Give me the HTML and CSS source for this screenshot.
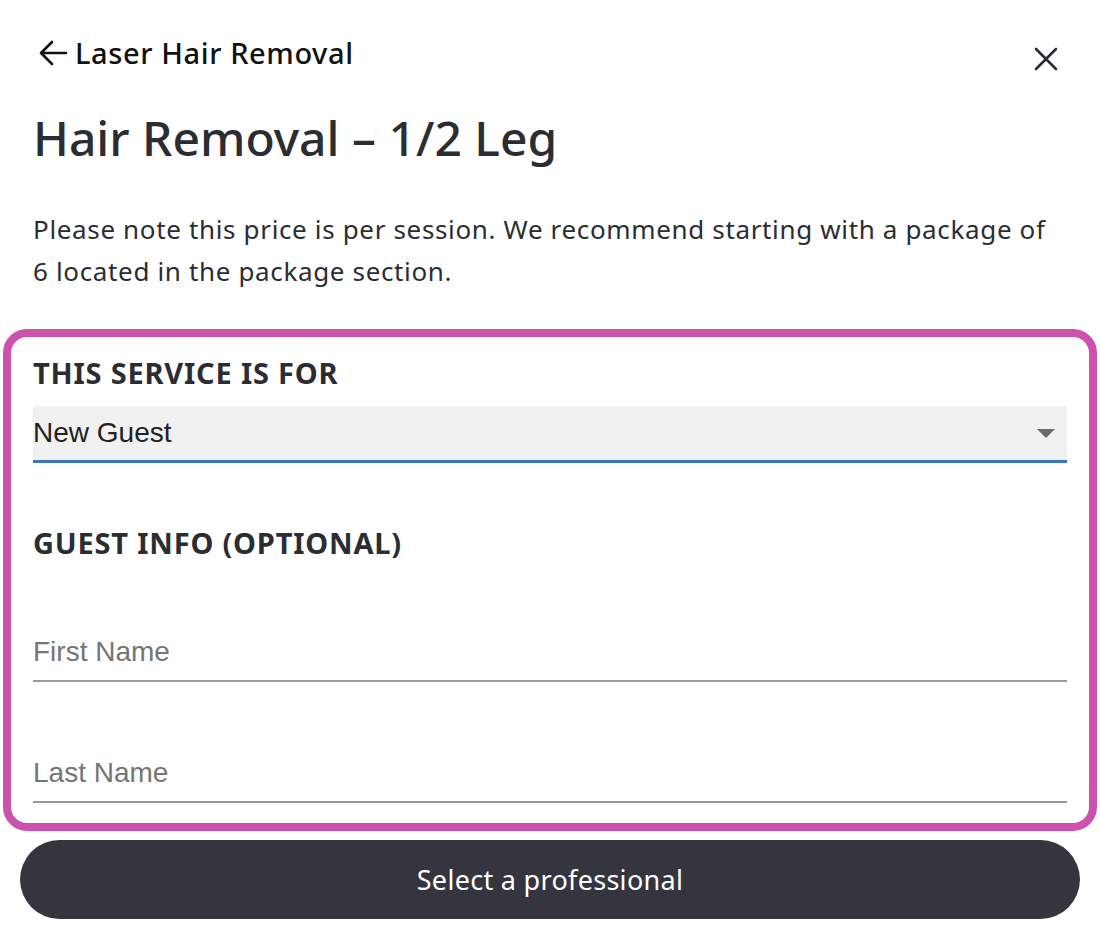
FILE: index.html
```html
<!DOCTYPE html>
<html lang="en">
<head>
<meta charset="utf-8">
<title>Hair Removal – 1/2 Leg</title>
<link rel="stylesheet" href="styles.css">
</head>
<body>
<div class="page">
  <header class="topbar">
    <a class="back" href="#">
      <svg class="back-icon" width="31" height="30" viewBox="0 0 31 30" aria-hidden="true">
        <path d="M29 15H5M15 4L4 15l11 11" fill="none" stroke="#111" stroke-width="2.6" stroke-linecap="round" stroke-linejoin="round"/>
      </svg>
      <span>Laser Hair Removal</span>
    </a>
    <button class="close" aria-label="Close">
      <svg width="24" height="24" viewBox="0 0 24 24" aria-hidden="true">
        <path d="M2 2L22 22M22 2L2 22" fill="none" stroke="#2b2d33" stroke-width="2.6" stroke-linecap="round"/>
      </svg>
    </button>
  </header>

  <h1 class="title">Hair Removal – 1/2 Leg</h1>
  <p class="desc">Please note this price is per session. We recommend starting with a package of 6 located in the package section.</p>

  <section class="highlight">
    <h2 class="label">THIS SERVICE IS FOR</h2>
    <div class="select">
      <span class="select-value">New Guest</span>
      <span class="caret"></span>
    </div>
    <h2 class="label label-guest">GUEST INFO (OPTIONAL)</h2>
    <div class="field field-first"><span class="placeholder">First Name</span></div>
    <div class="field field-last"><span class="placeholder">Last Name</span></div>
  </section>

  <button class="cta">Select a professional</button>
</div>
</body>
</html>
```
FILE: styles.css
```css
* { box-sizing: border-box; }
html, body { margin: 0; padding: 0; background: #fff; }
body {
  font-family: "Noto Sans", "Open Sans", sans-serif;
  color: #2b2d33;
  overflow: hidden;
  height: 940px;
}
.page { width: 1100px; }

.topbar {
  display: flex;
  justify-content: space-between;
  align-items: flex-start;
  padding: 35px 42px 0 37px;
}
.back {
  display: flex;
  align-items: center;
  gap: 7px;
  color: #111;
  text-decoration: none;
  font-size: 29px;
  line-height: 36px;
  letter-spacing: 0.6px;
  font-weight: 500;
}
.back-icon { display: block; }
.close {
  border: 0;
  background: none;
  padding: 0;
  margin-top: 12px;
  width: 24px;
  height: 24px;
}
.close svg { display: block; }

.title {
  margin: 38px 0 0 33px;
  font-size: 48px;
  line-height: 58px;
  font-weight: 500;
  color: #2b2d33;
}
.desc {
  margin: 41px 45px 0 33px;
  font-size: 26px;
  line-height: 42px;
  letter-spacing: 0.65px;
  color: #2b2d33;
}

.highlight {
  margin: 37px 3px 0 3px;
  border: 8px solid #cc52ae;
  border-radius: 24px;
  padding: 18px 22px 20px 22px;
}
.label {
  margin: 0;
  font-size: 29px;
  line-height: 36px;
  letter-spacing: 0.8px;
  font-weight: 700;
  color: #2b2d33;
}
.select {
  margin-top: 15px;
  height: 57px;
  background: #f1f1f1;
  border-bottom: 3px solid #3a75c4;
  display: flex;
  align-items: center;
  justify-content: space-between;
  padding: 0 12px 0 0;
}
.select-value {
  font-family: "Liberation Sans", Arial, sans-serif;
  font-size: 28px;
  color: #222;
}
.caret {
  width: 0; height: 0;
  border-left: 9px solid transparent;
  border-right: 9px solid transparent;
  border-top: 9px solid #6b6b6b;
}
.label-guest { margin-top: 62px; }
.field {
  height: 58px;
  border-bottom: 2px solid #9a9a9a;
  display: flex;
  align-items: center;
}
.field-first { margin-top: 63px; }
.field-last { margin-top: 63px; }
.placeholder {
  font-family: "Liberation Sans", Arial, sans-serif;
  font-size: 28px;
  color: #757575;
}

.cta {
  display: block;
  margin: 9px 20px 0 20px;
  width: 1060px;
  height: 79px;
  border: 0;
  border-radius: 40px;
  background: #35353f;
  color: #fff;
  font-family: "Noto Sans", "Open Sans", sans-serif;
  font-size: 27px;
  letter-spacing: 0.3px;
}
```
